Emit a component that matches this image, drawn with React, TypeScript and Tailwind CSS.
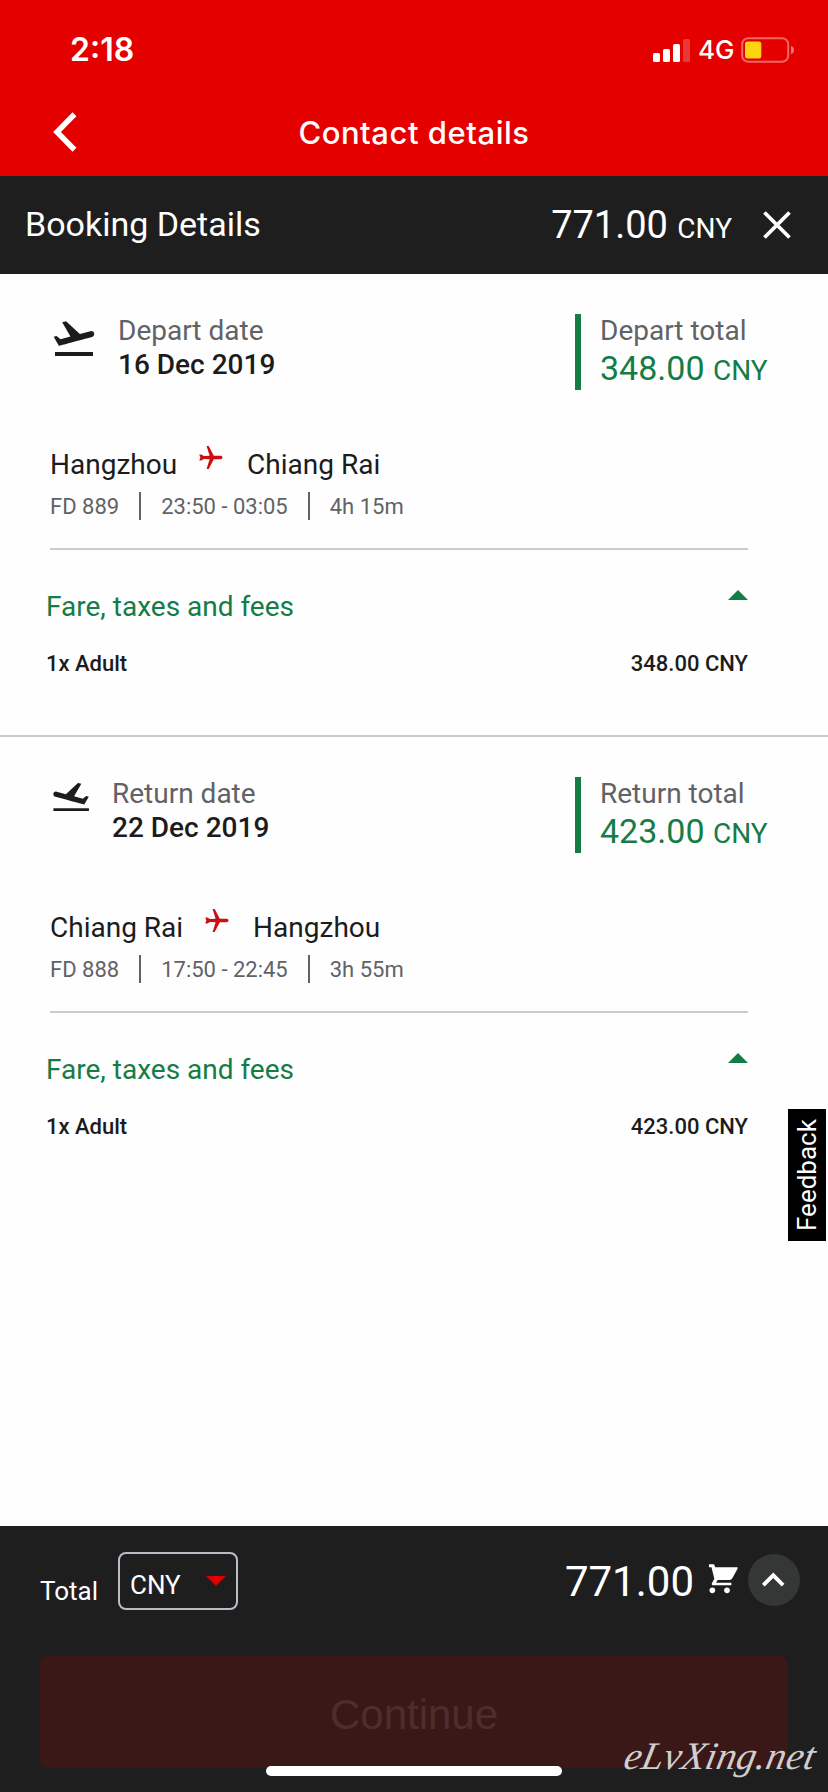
type Leg = {
  kind: "depart" | "return";
  label: string;
  date: string;
  totalLabel: string;
  amount: string;
  from: string;
  to: string;
  flight: string;
  times: string;
  duration: string;
};

const legs: Leg[] = [
  {
    kind: "depart",
    label: "Depart date",
    date: "16 Dec 2019",
    totalLabel: "Depart total",
    amount: "348.00",
    from: "Hangzhou",
    to: "Chiang Rai",
    flight: "FD 889",
    times: "23:50 - 03:05",
    duration: "4h 15m",
  },
  {
    kind: "return",
    label: "Return date",
    date: "22 Dec 2019",
    totalLabel: "Return total",
    amount: "423.00",
    from: "Chiang Rai",
    to: "Hangzhou",
    flight: "FD 888",
    times: "17:50 - 22:45",
    duration: "3h 55m",
  },
];

const PLANE =
  "M22.07 9.64c-.21-.8-1.04-1.28-1.84-1.06L14.92 10l-6.9-6.43-1.93.51 4.14 7.17-4.97 1.33-1.97-1.54-1.45.39 2.59 4.49s7.12-1.9 16.57-4.43c.81-.23 1.28-1.05 1.07-1.85z";

function DepartIcon() {
  return (
    <svg viewBox="0 0 24 24" className="mr-5 size-12 shrink-0 fill-[#1c1c1c]">
      <path d={PLANE} />
      <path d="M2.5 19h19v2h-19z" />
    </svg>
  );
}

function ReturnIcon() {
  return (
    <svg viewBox="0 0 24 24" className="mr-5 size-[42px] shrink-0 fill-[#1c1c1c]">
      <path d={PLANE} transform="translate(24 -0.2) scale(-1 1)" />
      <path d="M1.95 17.9h20.3v1.55H1.95z" />
    </svg>
  );
}

function StatusBar() {
  return (
    <div className="flex h-[99px] items-center pl-[70px] pr-[33px] font-['Inter',sans-serif]">
      <span className="text-[32px] font-semibold leading-10">2:18</span>
      <svg viewBox="0 0 38 24" className="ml-auto h-6 w-[38px] fill-white">
        <rect x="0" y="15" width="7" height="9" rx="1.5" />
        <rect x="10" y="11" width="7" height="13" rx="1.5" />
        <rect x="20" y="6" width="7" height="18" rx="1.5" />
        <rect x="30" y="1" width="7" height="23" rx="1.5" opacity="0.22" />
      </svg>
      <span className="ml-[7px] w-[37px] text-[26px] font-medium leading-10">4G</span>
      <svg viewBox="0 0 54 26" className="ml-[6px] h-[26px] w-[54px]">
        <rect x="1.2" y="1.2" width="46" height="23.6" rx="6" fill="none" stroke="#fff" strokeOpacity="0.4" strokeWidth="2" />
        <rect x="4" y="4.5" width="16.3" height="17" rx="2.5" fill="#fbd40f" />
        <path d="M50 9c2 .6 3 2 3 4s-1 3.400-3 4z" fill="#fff" fillOpacity="0.45" />
      </svg>
    </div>
  );
}

function LegSection({ leg }: { leg: Leg }) {
  return (
    <section className="h-[463px] border-b-2 border-[#cbcbcb] pt-10 last:border-transparent">
      <div className="flex h-[76px] items-start pl-[50px]">
        {leg.kind === "depart" ? <DepartIcon /> : <ReturnIcon />}
        <div className="text-[28px] leading-[34px]">
          <div className="text-[#616266]">{leg.label}</div>
          <div className="font-medium">{leg.date}</div>
        </div>
        <div className="ml-auto h-full w-[253px] border-l-[6px] border-[#157c46] pl-[19px]">
          <div className="text-[28px] leading-[34px] text-[#616266]">{leg.totalLabel}</div>
          <div className="text-[34px] leading-10 text-[#157c46]">
            {leg.amount} <span className="text-[28px]">CNY</span>
          </div>
        </div>
      </div>

      <div className="ml-[50px] mr-20 mt-[58px] border-b-2 border-[#cbcbcb] pb-7">
        <div className="flex text-[28px] leading-[34px]">
          <span>{leg.from}</span>
          <svg viewBox="0 0 24 24" className="-mt-[2px] ml-[22px] mr-6 size-6 fill-[#cc0d12]">
            <path d="M23.500 11.500c0 1.100-1 1.700-2.200 1.700H14.800L9.700 23.100H7.600L10.600 13.300 5 12.900 2.200 14.400.300 14.600 1.300 11.500.300 8.400 2.200 8.600 5 10.100 10.600 9.700 7.600 0H9.700L14.800 9.800H21.300C22.500 9.800 23.500 10.400 23.500 11.500z" />
          </svg>
          <span>{leg.to}</span>
        </div>
        <div className="mt-[10px] flex h-7 text-[22px] leading-[30px] text-[#616266]">
          <span className="pr-5">{leg.flight}</span>
          <span className="border-x-2 border-[#616266] pl-5 pr-[20px]">{leg.times}</span>
          <span className="pl-5">{leg.duration}</span>
        </div>
      </div>

      <div className="ml-[46px] mr-20 mt-10">
        <div className="flex justify-between text-[28px] leading-[34px] text-[#157c46]">
          <span>Fare, taxes and fees</span>
          <svg viewBox="0 0 20 10" className="h-[10px] w-5 fill-[#157c46]">
            <path d="M0 10 10 0l10 10z" />
          </svg>
        </div>
        <div className="mt-[26px] flex justify-between text-[22px] font-medium leading-7">
          <span>1x Adult</span>
          <span>{leg.amount} CNY</span>
        </div>
      </div>
    </section>
  );
}

function Footer() {
  return (
    <footer className="h-[266px] bg-[#1e1e1e] px-10 pt-[26px] text-white">
      <div className="-mr-3 flex h-[58px] items-start">
        <span className="mt-6 w-[78px] text-[26px] leading-[30px]">Total</span>
        <button className="flex h-[58px] w-[120px] items-start justify-between rounded-lg border-2 border-[#b9bdc6] pl-[10px] pr-[10px]">
          <span className="mt-4 text-[26px] leading-[30px]">CNY</span>
          <svg viewBox="0 0 20 10" className="mt-[22px] h-[10px] w-5 fill-[#dc0000]">
            <path d="M0 0h20L10 10z" />
          </svg>
        </button>
        <span className="ml-auto mt-[5px] text-[42px] leading-[50px]">771.00</span>
        <svg viewBox="27 42 90 90" className="ml-[15px] mt-3 size-[30px] fill-white">
          <path d="M27 43h13.500q2 0 3 3l2 6H111q3.500 0 2 3.500L97 85q-2.500 5-8 5H53l-5 8h46v8H41q-8 0-5-7l7-13L34.500 52H27z" />
          <circle cx="37" cy="121" r="8.500" />
          <circle cx="81" cy="121" r="8.500" />
        </svg>
        <button className="ml-[9px] mt-[2px] size-[52px] rounded-full bg-[#353737]">
          <svg viewBox="0 0 52 52" className="size-full fill-none stroke-white stroke-[3.8]">
            <path d="M15.300 31.200 25.200 21.300l9.900 9.900" />
          </svg>
        </button>
      </div>
      <button className="mt-[46px] flex h-28 w-full items-center justify-center rounded-lg bg-[#3a1818] pt-[4px] font-['Liberation_Sans',sans-serif] text-[42px] text-[#4e2d2d]">
        Continue
      </button>
    </footer>
  );
}

export default function App() {
  return (
    <div className="relative flex h-[1792px] w-[828px] flex-col overflow-hidden bg-[#fefefe] font-['Roboto',sans-serif] text-[#1c1c1c]">
      <header className="h-[176px] bg-[#e50000] text-white">
        <StatusBar />
        <div className="grid h-[67px] grid-cols-[100px_1fr_100px] items-center">
          <svg viewBox="0 0 24 40" className="mb-[2px] ml-[53px] h-10 w-6 fill-none stroke-white stroke-[5.5]">
            <path d="M21.500 2.200 4 20l17.500 17.800" />
          </svg>
          <h1 className="text-center font-['Inter',sans-serif] text-[31px] font-medium leading-10 tracking-[0.54px]">
            Contact details
          </h1>
        </div>
      </header>

      <div className="flex h-[98px] items-center bg-[#1e1e1e] pl-[25px] pr-[37px] text-white">
        <span className="pb-[2px] text-[34px] leading-10">Booking Details</span>
        <span className="ml-auto text-[38px] leading-[44px]">
          771.00 <span className="text-[28px] leading-none">CNY</span>
        </span>
        <svg viewBox="0 0 28 28" className="ml-[31px] size-7 fill-none stroke-white stroke-[3.8]">
          <path d="M1.500 1.500l25 25M26.500 1.500l-25 25" />
        </svg>
      </div>

      <main className="flex-1">
        {legs.map((leg) => (
          <LegSection key={leg.kind} leg={leg} />
        ))}
      </main>

      <Footer />

      <div className="absolute right-[2px] top-[1109px] flex h-[132px] w-[38px] rotate-180 items-center justify-center bg-black text-[26px] leading-[38px] text-white [writing-mode:vertical-rl]">
        Feedback
      </div>
      <div className="absolute left-[266px] top-[1766px] h-[10px] w-[296px] rounded-full bg-white" />
      <div className="absolute left-[625px] top-[1732px] -skew-x-12 font-['Liberation_Serif',serif] text-[39px] italic leading-[48px] tracking-[0.3px] text-[#d0cece]">
        eLvXing.net
      </div>
    </div>
  );
}
